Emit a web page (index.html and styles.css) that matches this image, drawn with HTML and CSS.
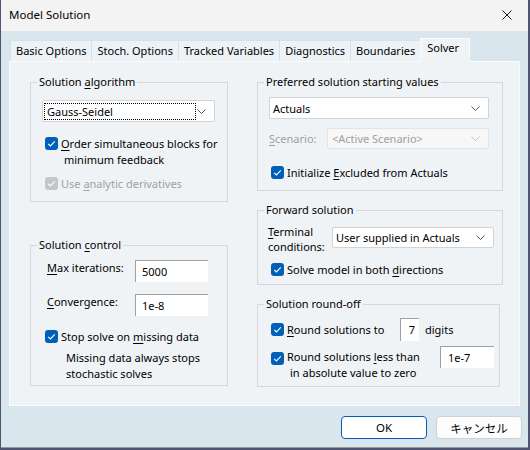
FILE: index.html
```html
<!doctype html>
<html>
<head>
	<meta charset="UTF-8" />
	<title>Model Solution</title>
	<link rel="stylesheet" href="styles.css">
</head>
<body>

	<div class="window">
		<div class="titlebar">
			<span class="title">Model Solution</span>
			<svg class="close" width="10" height="10" viewBox="0 0 10 10"><path d="M0.5 0.5 L9.5 9.5 M9.5 0.5 L0.5 9.5" stroke="#1a1a1a" stroke-width="1" fill="none"/></svg>
		</div>

		<div class="client">
			<div class="tabs">
				<div class="tab">Basic Options</div>
				<div class="tab">Stoch. Options</div>
				<div class="tab">Tracked Variables</div>
				<div class="tab">Diagnostics</div>
				<div class="tab">Boundaries</div>
				<div class="tab tabActive">Solver</div>
			</div>

			<div class="panel">
				<div class="col">
					<fieldset class="group gAlgo">
						<legend>Solution <u>a</u>lgorithm</legend>
						<div class="combo comboAlgo">
							<span class="comboText"><span class="focusRect">Gauss-Seidel</span></span>
							<svg class="chev" width="9" height="5" viewBox="0 0 9 5"><path d="M0.5 0.5 L4.5 4.5 L8.5 0.5" stroke="#555" fill="none"/></svg>
						</div>
						<div class="checkRow rowOrder">
							<span class="check"><svg width="13" height="13" viewBox="0 0 13 13"><path d="M3.2 6.8 L5.4 9 L9.8 4.4" stroke="#fff" stroke-width="1.1" fill="none"/></svg></span>
							<span class="checkLabel"><u>O</u>rder simultaneous blocks for<br><span class="indent">minimum feedback</span></span>
						</div>
						<div class="checkRow rowDeriv disabled">
							<span class="check checkOff"><svg width="13" height="13" viewBox="0 0 13 13"><path d="M3.2 6.8 L5.4 9 L9.8 4.4" stroke="#fff" stroke-width="1.1" fill="none"/></svg></span>
							<span class="checkLabel">Use <u>a</u>nalytic derivatives</span>
						</div>
					</fieldset>

					<fieldset class="group gControl">
						<legend>Solution <u>c</u>ontrol</legend>
						<div class="fieldRow rowMax">
							<span class="fieldLabel"><u>M</u>ax iterations:</span>
							<span class="edit editNum">5000</span>
						</div>
						<div class="fieldRow rowConv">
							<span class="fieldLabel"><u>C</u>onvergence:</span>
							<span class="edit editNum">1e-8</span>
						</div>
						<div class="checkRow rowStop">
							<span class="check"><svg width="13" height="13" viewBox="0 0 13 13"><path d="M3.2 6.8 L5.4 9 L9.8 4.4" stroke="#fff" stroke-width="1.1" fill="none"/></svg></span>
							<span class="checkLabel">Stop solve on <u>m</u>issing data</span>
						</div>
						<p class="hint">Missing data always stops<br>stochastic solves</p>
					</fieldset>
				</div>

				<div class="col">
					<fieldset class="group gStart">
						<legend>Preferred solution starting values</legend>
						<div class="combo comboActuals">
							<span class="comboText">Actuals</span>
							<svg class="chev" width="9" height="5" viewBox="0 0 9 5"><path d="M0.5 0.5 L4.5 4.5 L8.5 0.5" stroke="#555" fill="none"/></svg>
						</div>
						<div class="scenarioRow disabled">
							<span class="scenarioLabel"><u>S</u>cenario:</span>
							<div class="combo comboOff">
								<span class="comboText">&lt;Active Scenario&gt;</span>
								<svg class="chev" width="9" height="5" viewBox="0 0 9 5"><path d="M0.5 0.5 L4.5 4.5 L8.5 0.5" stroke="#c4c4c4" fill="none"/></svg>
							</div>
						</div>
						<div class="checkRow rowInit">
							<span class="check"><svg width="13" height="13" viewBox="0 0 13 13"><path d="M3.2 6.8 L5.4 9 L9.8 4.4" stroke="#fff" stroke-width="1.1" fill="none"/></svg></span>
							<span class="checkLabel">Initialize <u>E</u>xcluded from Actuals</span>
						</div>
					</fieldset>

					<fieldset class="group gForward">
						<legend>Forward solution</legend>
						<div class="terminalRow">
							<span class="terminalLabel"><u>T</u>erminal<br>conditions:</span>
							<div class="combo comboTerminal">
								<span class="comboText">User supplied in Actuals</span>
								<svg class="chev" width="9" height="5" viewBox="0 0 9 5"><path d="M0.5 0.5 L4.5 4.5 L8.5 0.5" stroke="#555" fill="none"/></svg>
							</div>
						</div>
						<div class="checkRow rowBoth">
							<span class="check"><svg width="13" height="13" viewBox="0 0 13 13"><path d="M3.2 6.8 L5.4 9 L9.8 4.4" stroke="#fff" stroke-width="1.1" fill="none"/></svg></span>
							<span class="checkLabel">Solve model in both <u>d</u>irections</span>
						</div>
					</fieldset>

					<fieldset class="group gRound">
						<legend>Solution round-off</legend>
						<div class="roundRow rowDigits">
							<span class="check"><svg width="13" height="13" viewBox="0 0 13 13"><path d="M3.2 6.8 L5.4 9 L9.8 4.4" stroke="#fff" stroke-width="1.1" fill="none"/></svg></span>
							<span class="checkLabel digitsLabel"><u>R</u>ound solutions to</span>
							<span class="edit editDigits">7</span>
							<span class="digitsUnit">digits</span>
						</div>
						<div class="roundRow rowZero">
							<span class="check"><svg width="13" height="13" viewBox="0 0 13 13"><path d="M3.2 6.8 L5.4 9 L9.8 4.4" stroke="#fff" stroke-width="1.1" fill="none"/></svg></span>
							<span class="checkLabel zeroLabel">Round solutions <u>l</u>ess than<br><span class="indent">in absolute value to zero</span></span>
							<span class="edit editZero">1e-7</span>
						</div>
					</fieldset>
				</div>
			</div>

			<div class="buttons">
				<button class="btn btnDefault">OK</button>
				<button class="btn">キャンセル</button>
			</div>
		</div>
	</div>

</body>
</html>
```

FILE: styles.css
```css
body {
	margin: 0;
	background: #4d5570;
	font-family: "Noto Sans", "Noto Sans CJK JP", sans-serif;
	font-size: 11px;
	color: #000;
}
u {
	text-decoration-thickness: 1px;
	text-underline-offset: 2px;
}
.window {
	width: 527px;
	height: 448px;
	margin-left: 1px;
	display: flex;
	flex-direction: column;
	background: #dae6ee;
	border-bottom: 1px solid #9a9a9a;
	box-sizing: border-box;
}
.titlebar {
	height: 31px;
	flex: none;
	display: flex;
	align-items: center;
	padding-left: 8px;
	background: #f3f3f3;
}
.title {
	font-size: 11.5px;
	line-height: 16px;
	margin-top: -1px;
}
.close {
	margin-left: auto;
	margin-right: 16px;
	margin-top: -1px;
}
.client {
	flex: 1;
	padding: 8px 6px 0 8px;
}

/* tabs */
.tabs {
	display: flex;
	align-items: flex-end;
	height: 22px;
	margin-left: 1px;
	position: relative;
	z-index: 1;
}
.tab {
	height: 21px;
	line-height: 20px;
	padding: 0 5px;
	box-sizing: border-box;
	background: #edf2f6;
	border: 1px solid #d9e0e5;
	border-bottom: none;
	margin-right: -1px;
	white-space: nowrap;
}
.tabActive {
	height: 24px;
	line-height: 18px;
	padding: 0 10px 0 6px;
	margin-bottom: -1px;
	background: #eff3f6;
	border-color: #f9fbfc;
}

/* panel */
.panel {
	width: 511px;
	height: 345px;
	box-sizing: border-box;
	background: #eff3f6;
	border: 1px solid #f9fbfc;
	padding: 12px 0 0 20px;
	display: grid;
	grid-template-columns: 198px 246px;
	column-gap: 29px;
	align-items: start;
}
.col {
	display: flex;
	flex-direction: column;
}
.group {
	margin: 0;
	padding: 0 7px 0 12px;
	border: 1px solid #d5d9dd;
	box-sizing: border-box;
	min-width: 0;
}
.group legend {
	padding: 0 2px;
	margin-left: -6px;
	line-height: 16px;
}
.gAlgo { height: 128px; }
.gControl { height: 149px; margin-top: 35px; }
.gStart { height: 117px; }
.gForward { height: 83px; margin-top: 11px; }
.gRound { height: 91px; margin-top: 11px; width: 243px; padding-right: 5px; }

/* combo boxes */
.combo {
	display: flex;
	align-items: center;
	box-sizing: border-box;
	height: 22px;
	background: #fff;
	border: 1px solid #d3d3d3;
	border-radius: 2px;
}
.comboText {
	flex: 1;
	padding-left: 3px;
	white-space: nowrap;
}
.chev {
	margin-right: 8px;
}
.comboAlgo {
	width: 173px;
	margin: 10px 0 0 -1px;
}
.comboAlgo .comboText {
	padding-left: 0;
}
.focusRect {
	display: block;
	width: 152px;
	height: 17px;
	line-height: 15px;
	box-sizing: border-box;
	margin-left: 1px;
	padding-left: 2px;
	border: 1px dotted #000;
}
.comboActuals {
	width: 220px;
	margin: 7px 0 0 -1px;
}
.comboOff {
	width: 162px;
	height: 21px;
	background: #f7f7f7;
	border-color: #e3e3e3;
}
.comboOff .comboText {
	padding-left: 4px;
}
.comboTerminal {
	width: 162px;
	height: 21px;
	margin-top: 3px;
}

/* check boxes */
.checkRow {
	display: flex;
	align-items: flex-start;
	line-height: 16px;
}
.check {
	flex: none;
	width: 13px;
	height: 13px;
	margin-top: 1px;
	margin-right: 3px;
	border-radius: 3px;
	background: #005fb8;
}
.check svg {
	display: block;
}
.checkOff {
	background: #c6c6c6;
}
.disabled {
	color: #a0a0a0;
}
.indent {
	padding-left: 3px;
}
.rowOrder { margin: 14px 0 0 2px; }
.rowDeriv { margin: 8px 0 0 2px; }
.rowStop { margin: 13px 0 0 2px; }
.rowInit { margin: 16px 0 0 1px; }
.rowBoth { margin: 8px 0 0 1px; }

/* edit fields */
.fieldRow {
	display: flex;
	align-items: flex-start;
	line-height: 16px;
}
.fieldLabel {
	width: 88px;
	margin-left: 4px;
}
.edit {
	box-sizing: border-box;
	background: #fff;
	border-top: 1px solid #a0a0a0;
	border-left: 1px solid #a0a0a0;
	line-height: 20px;
}
.editNum {
	width: 73px;
	height: 22px;
	padding: 1px 0 0 6px;
}
.rowMax { margin-top: 7px; }
.rowConv { margin-top: 12px; }
.hint {
	margin: 5px 0 0 23px;
	line-height: 16px;
}

/* right column rows */
.scenarioRow {
	display: flex;
	align-items: center;
	margin: 9px 0 0 -1px;
}
.scenarioLabel {
	width: 58px;
}
.terminalRow {
	display: flex;
	align-items: flex-start;
	margin: 6px 0 0 -2px;
}
.terminalLabel {
	width: 64px;
	line-height: 15px;
}
.roundRow {
	display: flex;
	line-height: 16px;
	margin-left: 1px;
}
.rowDigits {
	align-items: center;
	margin-top: 6px;
}
.rowDigits .check {
	margin-top: 0;
}
.digitsLabel {
	width: 113px;
}
.editDigits {
	width: 19px;
	height: 23px;
	line-height: 22px;
	text-align: right;
	padding-right: 4px;
}
.digitsUnit {
	margin-left: 6px;
}
.rowZero {
	align-items: flex-start;
	margin-top: 5px;
}
.rowZero .check {
	margin-top: 6px;
}
.zeroLabel {
	margin-top: 3px;
	width: 150px;
}
.editZero {
	margin-left: auto;
	width: 54px;
	height: 22px;
	padding: 1px 0 0 7px;
}

/* buttons */
.buttons {
	display: flex;
	justify-content: flex-end;
	gap: 9px;
	margin-top: 10px;
}
.btn {
	width: 86px;
	height: 23px;
	padding: 0;
	font-family: "Noto Sans", "Noto Sans CJK JP", sans-serif;
	font-size: 11.5px;
	color: #000;
	background: #fdfdfd;
	border: 1px solid #d0d0d0;
	border-radius: 4px;
}
.btnDefault {
	background: #fff;
	border-color: #005fb8;
}
```
